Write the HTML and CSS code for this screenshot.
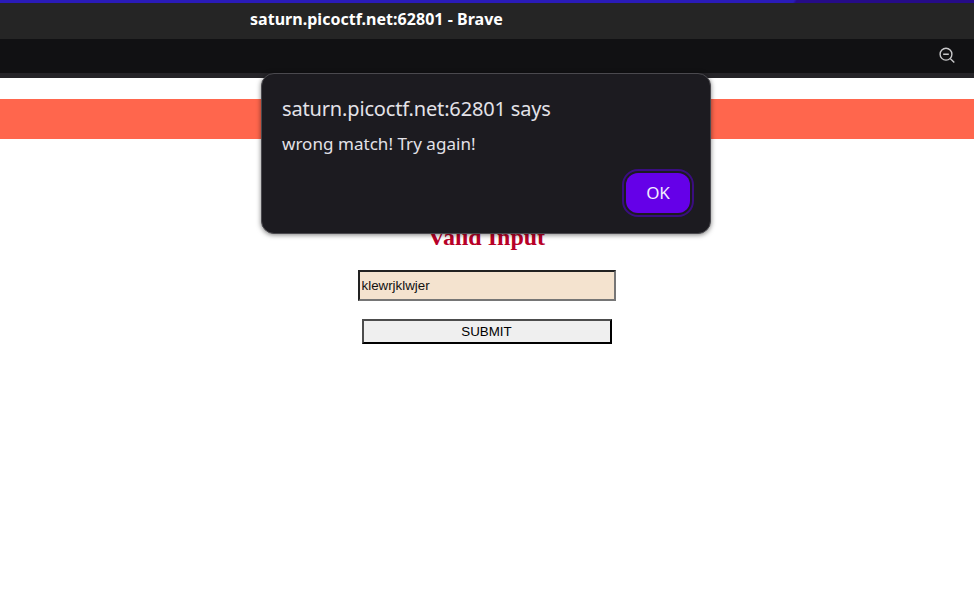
FILE: index.html
```html
<!DOCTYPE html>
<html lang="en">
<head>
<meta charset="utf-8">
<title>saturn.picoctf.net:62801</title>
<link rel="stylesheet" href="styles.css">
</head>
<body>
<div class="desktop-strip"></div>
<header class="titlebar"><span class="window-title">saturn.picoctf.net:62801 - Brave</span></header>
<div class="toolbar">
  <svg class="zoom-icon" width="18" height="18" viewBox="0 0 18 18" fill="none" stroke="#c8c8ca" stroke-width="1.4">
    <circle cx="8" cy="7.2" r="5.9"/>
    <path d="M5.2 7.2h5.6M12.2 11.4l4.1 4.1"/>
  </svg>
</div>
<main class="page">
  <div class="banner"></div>
  <form class="form">
    <h2 class="heading">Valid Input</h2>
    <input class="field" type="text" value="klewrjklwjer">
    <button class="submit" type="button">SUBMIT</button>
  </form>
</main>
<div class="dialog" role="alertdialog">
  <div class="dialog-title">saturn.picoctf.net:62801 says</div>
  <div class="dialog-message">wrong match! Try again!</div>
  <button class="ok" type="button">OK</button>
</div>
</body>
</html>
```
FILE: styles.css
```css
* { box-sizing: border-box; }
body {
  margin: 0;
  height: 610px;
  overflow: hidden;
  background: #fff;
  display: flex;
  flex-direction: column;
}
.desktop-strip {
  height: 3px;
  background: linear-gradient(120deg, #2a1bb8 0 81.4%, #260c88 81.7%);
}
.titlebar {
  height: 36px;
  padding: 5px 0 0 250px;
  background: #252525;
  color: #fff;
  font: bold 16px/22px "Noto Sans", sans-serif;
  letter-spacing: 0.025px;
}
.window-title { display: inline-block; white-space: nowrap; }
.toolbar {
  height: 39px;
  padding: 8px 18px 0 0;
  display: flex;
  justify-content: flex-end;
  background: #111113;
  border-bottom: 5px solid #252428;
}
.page { padding-top: 21px; }
.banner { height: 40px; background: #ff664d; }
.form {
  display: flex;
  flex-direction: column;
  align-items: center;
  padding-top: 84px;
}
.heading {
  margin: 0;
  padding-right: 1px;
  height: 28px;
  color: #b80028;
  font: bold 24px/28px "Liberation Serif", serif;
}
.field {
  margin-top: 19px;
  width: 258px;
  height: 31px;
  padding: 1px 2px 1px 1.5px;
  border: 2px solid;
  border-color: #222 #767676 #767676 #222;
  background: #f4e3cf;
  color: #111;
  font: 13.333px "Liberation Sans", sans-serif;
}
.submit {
  margin-top: 18px;
  width: 250px;
  height: 25px;
  padding: 0 1px 0 0;
  border: 2px solid;
  border-color: #4c4c4c #000 #000 #4c4c4c;
  background: #efefef;
  color: #000;
  font: 13.333px "Liberation Sans", sans-serif;
}
.dialog {
  position: absolute;
  left: 261px;
  top: 73px;
  width: 450px;
  height: 161px;
  padding: 21px 20px 20px;
  display: flex;
  flex-direction: column;
  border: 1px solid #4a494e;
  border-radius: 13px;
  background: #1c1b20;
  box-shadow: 0 1px 5px rgba(0, 0, 0, .5);
  color: #e3e2e8;
  font-family: "Noto Sans", sans-serif;
}
.dialog-title { font-size: 20px; line-height: 28px; letter-spacing: -0.16px; }
.dialog-message { margin-top: 9px; font-size: 17px; line-height: 24px; letter-spacing: 0.04px; }
.ok {
  align-self: flex-end;
  margin-top: 17px;
  width: 64px;
  height: 40px;
  padding: 0 0 2px;
  border: 0;
  border-radius: 12px;
  outline: 2px solid #3a0d80;
  outline-offset: 2px;
  background: #6500e8;
  color: #f2edff;
  font: 17px "Noto Sans", sans-serif;
  letter-spacing: -0.2px;
}
```
